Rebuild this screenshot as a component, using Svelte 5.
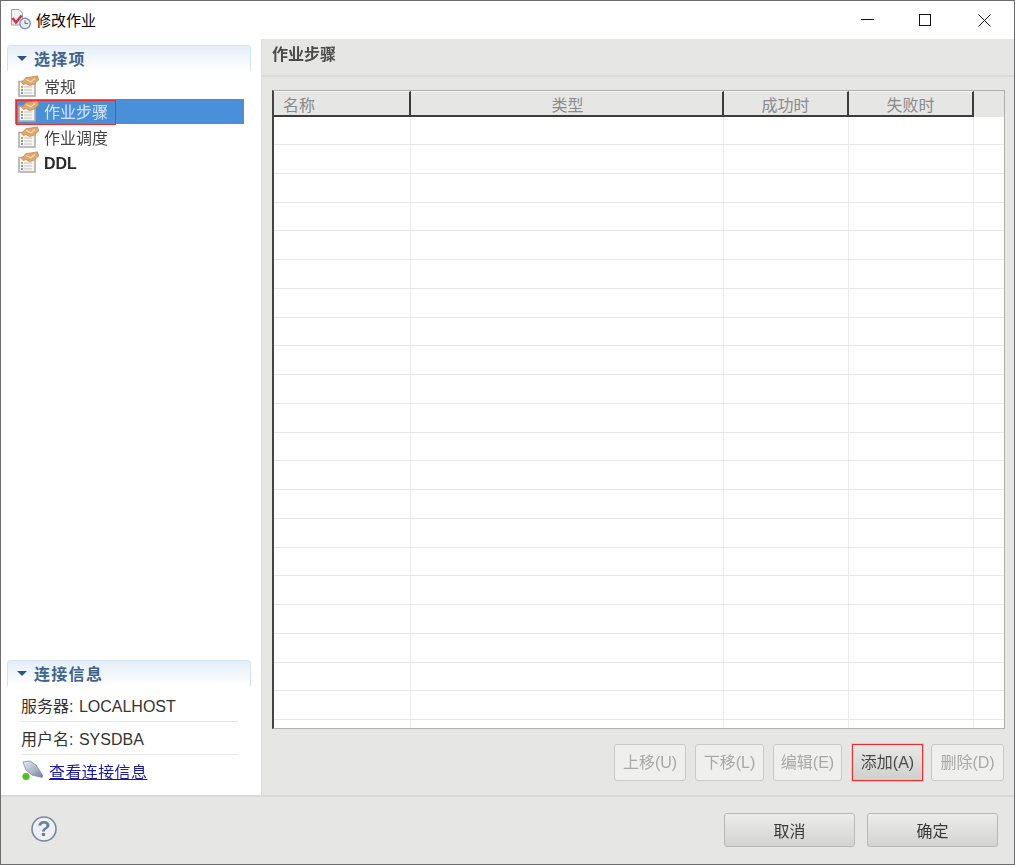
<script>
  const items = [
    { label: '常规' },
    { label: '作业步骤', selected: true },
    { label: '作业调度' },
    { label: 'DDL' }
  ];
  const columns = [
    { label: '名称', cls: 'c1' },
    { label: '类型', cls: 'c2' },
    { label: '成功时', cls: 'c3' },
    { label: '失败时', cls: 'c4' }
  ];
  const rows = Array.from({ length: 22 }, (_, i) => i);
  const actions = [
    { label: '上移(U)', w: 72 },
    { label: '下移(L)', w: 69 },
    { label: '编辑(E)', w: 69 },
    { label: '添加(A)', w: 71, active: true },
    { label: '删除(D)', w: 73 }
  ];
</script>

{#snippet pageIcon()}
  <svg class="item-icon" width="22" height="22" viewBox="0 0 22 22">
    <rect x="2" y="6.5" width="16" height="14.5" fill="#f6f6f4" stroke="#aeaea9" stroke-width="1.6" />
    <rect x="4" y="11" width="2" height="2" fill="#d9a05a" />
    <rect x="4" y="14" width="2" height="2" fill="#6fb56c" />
    <rect x="4" y="17" width="2" height="2" fill="#7f95d6" />
    <path d="M7 12h8M7 15h8M7 18h8" stroke="#c2c2be" stroke-width="1" />
    <path d="M4.5 7.5 L9 2.5 L14 2 L20.5 .8 L21.7 5 L16.5 9.5 L12.5 10.5 L9 8.5 L6.5 9.5 Z" fill="#e0a76b" stroke="#c48d52" stroke-width=".8" />
    <path d="M9 4.5 L14 6.8 L18 3.5" fill="none" stroke="#f6dcb8" stroke-width="1.3" />
  </svg>
{/snippet}

{#snippet sectionHead(text)}
  <div class="section-head">
    <span class="tri"></span>
    <span>{text}</span>
  </div>
{/snippet}

<div class="window">
  <header class="titlebar">
    <svg class="app-icon" width="22" height="22" viewBox="0 0 22 22">
      <path d="M.5.5H8l3.5 3.5V16H.5Z" fill="#f1f1f6" stroke="#9c9cac" />
      <path d="M1.5 9 L5 13.5 L10.5 6.5" fill="none" stroke="#d8303a" stroke-width="2.4" />
      <circle cx="14" cy="14.5" r="5.2" fill="#e4eaf2" stroke="#8496ae" stroke-width="1.4" />
      <path d="M14 11.5V14.5H16.8" fill="none" stroke="#5d7088" stroke-width="1" />
    </svg>
    <span class="title">修改作业</span>
    <div class="win-controls">
      <svg width="13" height="13" viewBox="0 0 13 13"><path d="M0 5.5H13" stroke="#111" /></svg>
      <svg class="max" width="13" height="13" viewBox="0 0 13 13"><rect x=".5" y=".5" width="11" height="11" fill="none" stroke="#111" /></svg>
      <svg width="13" height="13" viewBox="0 0 13 13"><path d="M.5 .5L12.5 12.5M12.5 .5L.5 12.5" stroke="#111" /></svg>
    </div>
  </header>

  <div class="body">
    <aside class="sidebar">
      <section class="options">
        {@render sectionHead('选择项')}
        <ul>
          {#each items as item}
            <li class:selected={item.selected} class:latin={item.label === 'DDL'}>
              {@render pageIcon()}
              <span>{item.label}</span>
              {#if item.selected}<i class="redbox"></i>{/if}
            </li>
          {/each}
        </ul>
      </section>
      <section class="conn">
        {@render sectionHead('连接信息')}
        <div class="conn-row">服务器: LOCALHOST</div>
        <div class="conn-row">用户名: SYSDBA</div>
        <div class="conn-link">
          <svg width="24" height="22" viewBox="0 0 24 22">
            <defs>
              <linearGradient id="plug" x1="0" y1="0" x2="1" y2="1">
                <stop offset="0" stop-color="#e8edf3" />
                <stop offset=".55" stop-color="#a9b6c8" />
                <stop offset="1" stop-color="#6d7f98" />
              </linearGradient>
            </defs>
            <path d="M2 2 L9 1 L15 5 L22 16 L21 17.5 L11 15 L5 10 Z" fill="url(#plug)" stroke="#7a8a9f" stroke-width=".8" />
            <circle cx="5" cy="16.5" r="3.6" fill="#4fc021" />
          </svg>
          <a href="#top">查看连接信息</a>
        </div>
      </section>
    </aside>

    <main class="content">
      <h2>作业步骤</h2>
      <div class="pane">
        <div class="table">
          <div class="thead">
            {#each columns as col}
              <div class="th {col.cls}">{col.label}</div>
            {/each}
            <div class="th-rest"></div>
          </div>
          <div class="tbody">
            {#each rows as r}
              <div class="tr">
                <div class="td c1"></div>
                <div class="td c2"></div>
                <div class="td c3"></div>
                <div class="td c4"></div>
                <div class="td rest"></div>
              </div>
            {/each}
          </div>
        </div>
        <div class="actions">
          {#each actions as a}
            <button class="action" class:active={a.active} disabled={!a.active} style="width:{a.w}px">{a.label}</button>
          {/each}
        </div>
      </div>
    </main>
  </div>

  <footer class="footer">
    <svg class="help" width="28" height="28" viewBox="0 0 28 28">
      <circle cx="14" cy="14" r="12" fill="#eef0f3" stroke="#76879f" stroke-width="1.6" />
      <text x="14" y="21" text-anchor="middle" class="help-q">?</text>
    </svg>
    <div class="footer-btns">
      <button class="big">取消</button>
      <button class="big">确定</button>
    </div>
  </footer>
</div>

<style>
  :global(body) { margin: 0; background: #e6e6e5; }
  .window {
    box-sizing: border-box;
    width: 1015px;
    height: 865px;
    display: flex;
    flex-direction: column;
    border: 1px solid #6c6c6c;
    font-family: "Liberation Sans", "Noto Sans CJK SC", sans-serif;
    font-size: 16px;
    color: #333;
    background: #e6e6e5;
    overflow: hidden;
  }
  .titlebar {
    height: 38px;
    flex: none;
    box-sizing: border-box;
    display: flex;
    align-items: center;
    background: #fff;
    padding: 0 0 2px 10px;
  }
  .app-icon { margin: 2px 3px 0 0; }
  .title { font-size: 15px; color: #000; }
  .win-controls {
    margin: 2px 0 0 auto;
    display: flex;
    gap: 45.5px;
    padding-right: 23px;
  }
  .max { margin: 0 1px 0 -1px; }
  .body { flex: 1; display: flex; min-height: 0; filter: blur(.35px); }

  .sidebar {
    width: 260px;
    flex: none;
    background: #fff;
    display: flex;
    flex-direction: column;
    justify-content: space-between;
    padding: 6px 10px 0 6px;
    box-sizing: border-box;
  }
  .section-head {
    height: 25px;
    box-sizing: content-box;
    display: flex;
    align-items: center;
    gap: 7px;
    padding: 0 0 0 9px;
    border: 1px solid #d5e3f1;
    border-bottom: 0;
    border-radius: 4px 4px 0 0;
    background: linear-gradient(#e4eef8, #fff);
    font-size: 16px;
    font-weight: 700;
    letter-spacing: 1.3px;
    color: #41648c;
  }
  .section-head span:last-child { margin-top: -2px; }
  .tri {
    width: 0;
    height: 0;
    border-left: 5px solid transparent;
    border-right: 5px solid transparent;
    border-top: 5px solid #2f5580;
  }
  ul { list-style: none; margin: 2px 0 0; padding: 0 7px 0 8px; }
  li {
    position: relative;
    height: 25.5px;
    display: flex;
    align-items: center;
    gap: 5px;
    padding-left: 2px;
    color: #444;
    white-space: nowrap;
  }
  li.selected { background: #4a90d9; color: #d5e4f6; }
  li.latin { font-weight: 700; color: #2a2a2a; }
  li.latin span { margin-top: 3px; }
  .item-icon { flex: none; }
  .redbox {
    position: absolute;
    left: 1px;
    top: 1px;
    width: 98px;
    height: 23px;
    border: 1px solid #f02b2b;
  }
  .conn { padding-bottom: 11px; }
  .conn .section-head { margin-bottom: 3px; }
  .conn-row {
    margin: 0 13px 0 14px;
    height: 33px;
    display: flex;
    align-items: center;
    border-bottom: 1px solid #e6e6e6;
    color: #333;
    box-sizing: border-box;
    word-spacing: 1px;
  }
  .conn-link {
    display: flex;
    align-items: center;
    gap: 4px;
    margin: 3px 0 0 14px;
    height: 26px;
  }
  .conn-link a { color: #1a1aa6; text-decoration: underline; letter-spacing: .4px; }

  .content { flex: 1; display: flex; flex-direction: column; min-width: 0; border-left: 1px solid #dcdcdc; }
  h2 {
    margin: 0;
    height: 38px;
    flex: none;
    box-sizing: border-box;
    padding: 2px 0 0 10px;
    font-size: 16px;
    font-weight: 700;
    color: #4b4b4b;
    border-bottom: 2px solid #dcdcda;
  }
  .pane { flex: 1; padding: 13px 9px 0 10px; display: flex; flex-direction: column; }
  .table {
    height: 639px;
    flex: none;
    box-sizing: border-box;
    border: 1px solid #b0b0ac;
    border-left: 2px solid #444;
    background: #fff;
    overflow: hidden;
  }
  .thead { display: flex; height: 26px; background: #e6e6e5; }
  .th {
    box-sizing: border-box;
    border-top: 1px solid #f6f6f6;
    border-right: 2px solid #3c3c3c;
    border-bottom: 2px solid #3c3c3c;
    text-align: center;
    color: #8a8a8a;
    line-height: 27px;
  }
  .th.c1 { text-align: left; padding-left: 9px; }
  .th.c2 { padding-left: 2px; }
  .th-rest { flex: 1; }
  .c1 { width: 137px; }
  .c2 { width: 313px; }
  .c3 { width: 125px; }
  .c4 { width: 125px; }
  .tr { display: flex; height: 28.75px; box-sizing: border-box; border-bottom: 1px solid #e8e8e8; }
  .tr:first-child { height: 28px; }
  .td { box-sizing: border-box; border-right: 1px solid #ececec; }
  .td.rest { flex: 1; border-right: 0; }

  .actions {
    display: flex;
    justify-content: flex-end;
    gap: 9px;
    margin: 15px 1px 0 0;
  }
  button { font: inherit; margin: 0; padding: 0; }
  .action {
    height: 37px;
    padding-bottom: 3px;
    border: 1px solid #c9c9c7;
    border-radius: 3px;
    background: #efefee;
    color: #a8a8a8;
  }
  .action.active {
    margin: 0 -1px 0 1px;
    border: 1px solid #f02b2b;
    border-radius: 0;
    background: linear-gradient(#e8e8e7, #cfcfcd);
    color: #4a4a4a;
    box-shadow: 0 0 0 1px #d0d0ce;
  }
  .footer {
    flex: none;
    height: 69px;
    box-sizing: border-box;
    border-top: 2px solid #dadad8;
    display: flex;
    align-items: center;
    justify-content: space-between;
    padding: 0 16px 0 29px;
    filter: blur(.35px);
  }
  .help { margin-bottom: 4px; }
  .help-q { font: 700 22px "Liberation Sans", sans-serif; fill: #6b7f9b; }
  .footer-btns { display: flex; gap: 12px; margin-bottom: 1px; }
  .big {
    width: 131px;
    height: 34px;
    border: 1px solid #b8b8b6;
    border-radius: 3px;
    background: linear-gradient(#ececeb, #d3d3d1);
    color: #3a3a3a;
  }
</style>
